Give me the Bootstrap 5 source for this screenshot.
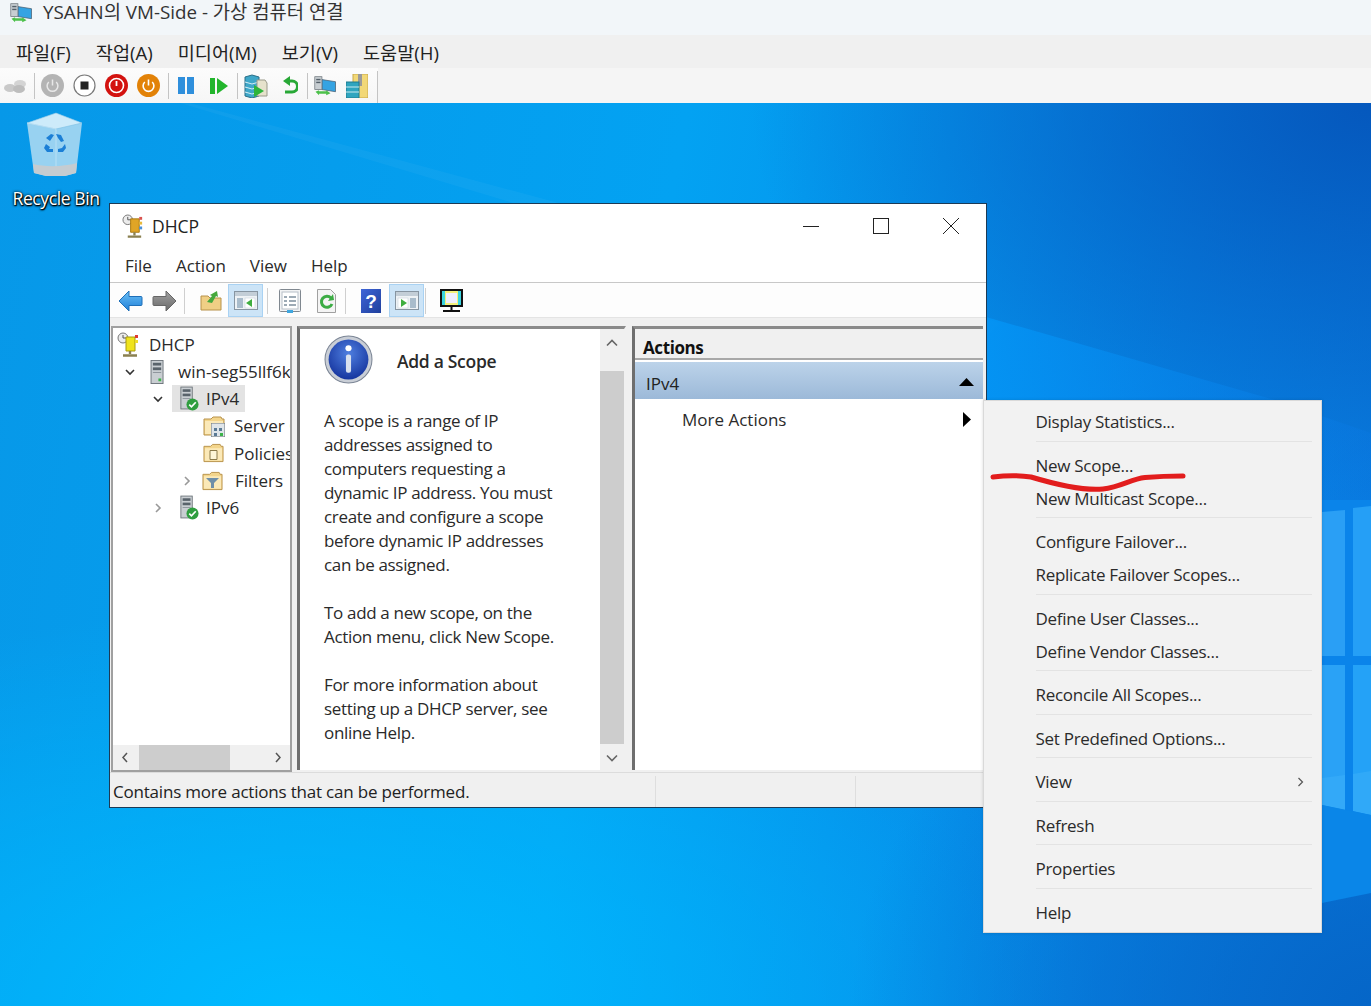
<!DOCTYPE html>
<html lang="ko">
<head>
<meta charset="UTF-8">
<title>YSAHN의 VM-Side - 가상 컴퓨터 연결</title>
<link href="https://cdn.jsdelivr.net/npm/bootstrap@5.3.0/dist/css/bootstrap.min.css" rel="stylesheet">
<script src="https://cdn.jsdelivr.net/npm/bootstrap@5.3.0/dist/js/bootstrap.bundle.min.js"></script>
<style>
html, body { height: 100%; }
body { width: 1371px; height: 1006px; overflow: hidden; font-family: "Open Sans", "Noto Sans CJK KR", sans-serif; font-size: 17px; color: #222; background: #fff; }
svg { display: block; flex: none; }
.vm-title { height: 35px; background: #f2f6f9; padding: 0 0 10px 10px; font-size: 18.8px; gap: 10px; color: #333; }
.vm-menu { height: 33px; background: #f0f0f0; padding: 3px 0 0 16px; gap: 25px; font-size: 18.6px; color: #222; }
.vm-tools { height: 35px; background: linear-gradient(#fcfcfc, #f6f6f6); padding-left: 4px; width: 378px; }
.vm-toolrow { background: #f5f5f5; height: 35px; }
.vm-tools svg { margin-right: 9px; }
.vm-sep { width: 1px; height: 26px; background: #c4c4c4; margin: 0 6px 0 0; flex: none; }
.desktop { position: relative; height: 903px; overflow: hidden;
  background: radial-gradient(ellipse 620px 420px at 1371px 0px, #0558bd 0%, rgba(5,88,189,0) 100%),
              radial-gradient(ellipse 520px 420px at 1371px 903px, #0566c8 0%, rgba(5,102,200,0) 100%),
              radial-gradient(ellipse 800px 400px at 300px 903px, #00baff 0%, rgba(0,186,255,0) 100%),
              linear-gradient(100deg, #0798e8 0%, #03a2f2 45%, #0786e6 80%, #0a78dc 100%); }
.wall-art { position: absolute; left: 0; top: 0; }
.desk-icon { position: absolute; left: 6px; top: 8px; width: 100px; text-align: center; color: #fff; font-size: 17.5px; text-shadow: 1px 1px 1px #000, 0 0 3px #000, 0 1px 2px #000; }
.desk-icon svg { margin: 0 0 0 18px; }
.dhcp-win { position: absolute; left: 109px; top: 100px; width: 878px; height: 605px; background: #fff; border: 1px solid #1c3a55; }
.win-head { height: 45px; padding-left: 12px; font-size: 17.5px; color: #222; gap: 7px; }
.win-btns { gap: 0; margin-left: auto; }
.win-btn { width: 70px; height: 43px; margin-bottom: 2px; }
.win-menu { height: 34px; padding-left: 15px; gap: 24px; font-size: 17px; border-bottom: 1px solid #c8c8c8; color: #2a2a2a; }
.win-tools { height: 35px; padding: 1px 0 0 6px; background: #fdfdfd; border-bottom: 1px solid #e4e4e4; }
.tool-on { background: #cce4f7; outline: 1px solid #a9d2f3; outline-offset: -1px; height: 33px; width: 35px; flex: none; }
.tool-sep { width: 1px; height: 26px; background: #cfcfcf; flex: none; }
.tool-cell { height: 33px; flex: none; }
.win-body { height: 454px; background: #f0f0f0; padding: 8px 3px 0 1px; gap: 5px; }
.tree-pane { width: 181px; background: #fff; border: 2px solid #a0a0a0; padding-top: 3px; position: relative; overflow: hidden; flex: none; }
.tree-row { height: 27.2px; white-space: nowrap; font-size: 17px; color: #2a2a2a; }
.tree-arrow { width: 14px; flex: none; }
.tree-hi { background: #e3e3e3; height: 27px; padding-right: 6px; }
.tree-scroll { position: absolute; left: 0; right: 0; bottom: 0; height: 25px; background: #f0f0f0; }
.tree-thumb { position: absolute; left: 26px; width: 91px; top: 0; bottom: 0; background: #cdcdcd; }
.info-pane { width: 329px; margin-bottom: 2px; background: #fff; border-left: 3px solid #6e6e6e; border-top: 3px solid #8a8a8a; border-right: 2px solid #f0f0f0; display: flex; flex: none; }
.info-text { width: 300px; padding: 0 0 0 24px; font-size: 17px; line-height: 24px; color: #2a2a2a; letter-spacing: -.33px; flex: none; }
.info-text p { margin: 0 0 24px; white-space: nowrap; }
.info-head { height: 80px; gap: 24px; font-weight: 600; font-size: 17.5px; letter-spacing: -.3px; padding-bottom: 20px; }
.info-title { padding-top: 4px; }
.info-bar { width: 24px; background: #f0f0f0; flex: none; display: flex; flex-direction: column; }
.info-thumb { flex: 1; background: #cdcdcd; margin: 42px 0 26px; }
.act-pane { flex: 1; margin-left: 1px; margin-bottom: 2px; background: #fff; border-left: 3px solid #6e6e6e; border-top: 3px solid #8a8a8a; }
.act-head { height: 31px; background: #f0f0f0; border-bottom: 2px solid #a8a8a8; padding: 9px 0 0 8px; font-weight: 700; font-size: 17px; color: #111; letter-spacing: -.4px; }
.act-sel { height: 37px; margin-top: 2px; background: linear-gradient(#bcd3ea, #9cb9d8); padding: 2px 9px 0 11px; font-size: 17px; color: #222; }
.act-sel span { padding-top: 4px; }
.act-item { height: 40px; padding: 0 12px 0 47px; font-size: 17px; color: #2a2a2a; }
.act-item span { padding-top: 2px; }
.status-bar { height: 35px; background: #f0f0f0; border-top: 1px solid #dcdcdc; font-size: 17px; color: #222; padding-top: 3px; }
.status-a { width: 546px; padding-left: 3px; border-right: 1px solid #dedede; height: 100%; white-space: nowrap; letter-spacing: -.2px; }
.status-b { width: 200px; border-right: 1px solid #dedede; height: 100%; }
.ctx-menu { position: absolute; left: 983px; top: 297px; width: 339px; height: 533px; background: #f2f2f2; border: 1px solid #d9d9d9; padding: 4.5px 9px 0 51.5px; font-size: 17px; color: #2b2b2b; box-shadow: 0 0 3px rgba(0,0,0,.15); }
.ctx-item { height: 33px; white-space: nowrap; letter-spacing: -.28px; }
.ctx-line { height: 1px; background: #e3e3e3; margin: 2px 0 7.5px; }
.red-mark { position: absolute; left: 985px; top: 362px; }
</style>
</head>
<body>
<svg width="0" height="0" style="position:absolute">
  <defs>
    <symbol id="ic-server" viewBox="0 0 16 26">
      <rect x="1" y="0.5" width="13" height="25" fill="#c9ced2" stroke="#6a7278"/>
      <rect x="3" y="3" width="9" height="3" fill="#59636b"/><rect x="3" y="8" width="9" height="3" fill="#59636b"/>
      <rect x="3" y="13" width="9" height="1" fill="#8a9298"/><rect x="9" y="20" width="3" height="3" fill="#3cb34a"/>
    </symbol>
    <symbol id="ic-check" viewBox="0 0 14 14">
      <circle cx="7" cy="7" r="6.5" fill="#2f9e3f"/><path d="M3.5 7.2l2.4 2.4 4.6-5" fill="none" stroke="#fff" stroke-width="1.8"/>
    </symbol>
    <symbol id="ic-folder" viewBox="0 0 22 20">
      <path d="M1 3h7l2-2h8l1 2h2v16H1z" fill="#f3d58c" stroke="#b8924a"/><rect x="2" y="5" width="18" height="13" fill="#fbe9b8"/>
    </symbol>
    <symbol id="ic-dhcp" viewBox="0 0 24 26">
      <circle cx="6" cy="6" r="5" fill="#ececec" stroke="#777"/><path d="M6 3v3h3" fill="none" stroke="#555"/>
      <path d="M9 5h9v14H9z" fill="#e0a526" stroke="#a87812"/>
      <rect x="18" y="3" width="3" height="3" fill="#d9534f"/><rect x="18" y="8" width="3" height="3" fill="#e8b93a"/><rect x="18" y="13" width="3" height="3" fill="#4a90d9"/>
      <path d="M13 19v3M6 23.500h14" stroke="#8a8050" stroke-width="2.400"/>
    </symbol>
    <symbol id="ic-dhcp-root" viewBox="0 0 24 26">
      <circle cx="6" cy="6" r="5" fill="#ececec" stroke="#777"/><path d="M6 3v3h3" fill="none" stroke="#555"/>
      <path d="M9 5h9v14H9z" fill="#efe31c" stroke="#a89a12"/>
      <rect x="18" y="3" width="3" height="3" fill="#e03a2f"/><rect x="18" y="8" width="3" height="3" fill="#f0dc2a"/>
      <path d="M13 19v3M6 23.500h14" stroke="#8a8050" stroke-width="2.400"/>
    </symbol>
    <symbol id="ic-monitor" viewBox="0 0 32 28">
      <path d="M11 5l19 3v14l-19-3z" fill="#35a3e2" stroke="#47596a"/>
      <rect x="1" y="1" width="10" height="18" fill="#c8ced2" stroke="#6a7278"/>
      <rect x="3" y="4" width="6" height="2" fill="#55606a"/><rect x="3" y="8" width="6" height="2" fill="#55606a"/>
      <path d="M2 22l5-2v1.500h10V20l6 4-6 3v-2H7v2z" fill="#4cc04a"/>
    </symbol>
    <symbol id="ic-window" viewBox="0 0 24 19">
      <rect x=".5" y=".5" width="23" height="18" fill="#eef2f5" stroke="#8795a1"/><rect x="1" y="1" width="22" height="4" fill="#c3ced7"/>
    </symbol>
  </defs>
</svg>

<div class="vm-title d-flex align-items-center">
  <svg width="23" height="20"><use href="#ic-monitor"/></svg>
  <span>YSAHN의 VM-Side - 가상 컴퓨터 연결</span>
</div>
<div class="vm-menu d-flex align-items-center">
  <span>파일(F)</span><span>작업(A)</span><span>미디어(M)</span><span>보기(V)</span><span>도움말(H)</span>
</div>
<div class="vm-toolrow">
<div class="vm-tools d-flex align-items-center">
  <svg width="22" height="14" viewBox="0 0 22 14" style="margin-right:8px"><ellipse cx="6" cy="9" rx="6" ry="4" fill="#c9c9c9"/><ellipse cx="16" cy="5" rx="6" ry="4" fill="#d4d4d4"/><ellipse cx="15" cy="10" rx="6" ry="4" fill="#bdbdbd"/></svg>
  <div class="vm-sep"></div>
  <svg width="23" height="23" viewBox="0 0 23 23"><circle cx="11.5" cy="11.5" r="11.5" fill="#b4b4b4"/><path d="M7.8 8a5.4 5.4 0 1 0 7.4 0M11.5 5.5v6" fill="none" stroke="#e8e8e8" stroke-width="1.5"/></svg>
  <svg width="23" height="23" viewBox="0 0 23 23"><circle cx="11.5" cy="11.5" r="10.5" fill="#fff" stroke="#7a7a7a" stroke-width="1.2"/><rect x="7.5" y="7.5" width="8" height="8" fill="#222"/></svg>
  <svg width="23" height="23" viewBox="0 0 23 23"><circle cx="11.5" cy="11.5" r="11.5" fill="#d3120f"/><circle cx="11.5" cy="11.5" r="7" fill="none" stroke="#fff" stroke-width="1.6"/><path d="M11.5 7v5" stroke="#fff" stroke-width="1.8"/></svg>
  <svg width="23" height="23" viewBox="0 0 23 23"><circle cx="11.5" cy="11.5" r="11.5" fill="#e28208"/><path d="M7.8 8a5.4 5.4 0 1 0 7.4 0M11.5 5.5v6" fill="none" stroke="#fff" stroke-width="1.6"/></svg>
  <div class="vm-sep" style="margin-left:-1px;margin-right:9px"></div>
  <svg width="16" height="17" viewBox="0 0 16 17" style="margin-right:16px"><rect width="7" height="17" fill="#2f8fdc"/><rect x="9" width="7" height="17" fill="#2f8fdc"/></svg>
  <svg width="18" height="16" viewBox="0 0 18 16"><rect width="5" height="16" fill="#22b52c"/><path d="M7 0l11 8-11 8z" fill="#22b52c"/></svg>
  <div class="vm-sep"></div>
  <svg width="24" height="24" viewBox="0 0 24 24" style="margin-right:14px"><path d="M1 3l7-2 7 2v19l-7 2-7-2z" fill="#3fa7c9" stroke="#2a6f88"/><path d="M1 8l7 2 7-2M1 13l7 2 7-2M1 18l7 2 7-2" fill="none" stroke="#d5eef5"/><path d="M13 6h8l2 3v13H13z" fill="#e6e2cc" stroke="#9a9a8a"/><path d="M10 11l10 6-10 6z" fill="#2db53a"/></svg>
  <svg width="16" height="19" viewBox="0 0 16 19"><path d="M6 5h4a5 5 0 0 1 0 11H3" fill="none" stroke="#28a836" stroke-width="3"/><path d="M8 0v10L1 5z" fill="#28a836"/></svg>
  <div class="vm-sep"></div>
  <svg width="23" height="20"><use href="#ic-monitor"/></svg>
  <svg width="22" height="24" viewBox="0 0 22 24"><rect x="7" y="0" width="15" height="24" fill="#f2d877" stroke="#c8a94a"/><rect x="12" y="0" width="4" height="12" fill="#9a9a9a"/><rect x="0" y="8" width="13" height="16" fill="#2fa5bf" stroke="#1e7a8e"/><path d="M0 13h13M0 18h13" stroke="#c9eaf0"/></svg>
  <div class="vm-sep" style="margin:0;height:32px;align-self:flex-end"></div>
</div>
</div>

<div class="desktop">
  <svg class="wall-art" width="1371" height="903" viewBox="0 0 1371 903">
    <defs>
      <linearGradient id="beam" x1="0" y1="0" x2="1" y2="0"><stop offset="0" stop-color="#0494f4" stop-opacity=".9"/><stop offset="1" stop-color="#0a7ae6" stop-opacity=".3"/></linearGradient>
    </defs>
    <path d="M190 0L1000 220L980 240L180 0z" fill="#fff" opacity=".04"/>
    <path d="M986 214L1275 297L1371 330V480H986z" fill="url(#beam)"/>
    <path d="M1322 397H1371V720H1322z" fill="#0a84ea"/>
    <path d="M1322 409L1345 407V553H1322z" fill="#2a9ff5"/>
    <path d="M1353 405L1371 403V553H1353z" fill="#259ff6"/>
    <path d="M1322 562H1345V707L1322 702z" fill="#2aa2f6"/>
    <path d="M1353 562H1371V712L1353 708z" fill="#24a2f7"/>
    <path d="M1322 675L1345 672V707L1322 702zM1353 671L1371 668V712L1353 708z" fill="#3aaefa" opacity=".55"/>
    <path d="M1322 702L1371 712V790L1322 800z" fill="#0a86e8"/>
  </svg>

  <div class="desk-icon">
    <svg width="60" height="66" viewBox="0 0 60 66">
      <path d="M3 12L32 2l26 10-6 50-11 3H22l-12-3z" fill="#a9d8f2" fill-opacity=".9"/>
      <path d="M3 12L32 2l26 10-26 6z" fill="#cdebfa" stroke="#7cc0e4" stroke-width=".6"/>
      <path d="M3 12l29 6v47" fill="none" stroke="#d9f0fb" stroke-opacity=".5"/>
      <path d="M9 53c12 3 30 3 44-1l-1 10-11 3H22l-12-3z" fill="#c5ccd1"/>
      <path d="M22 27l5-4 3 1-4 6zM32 23l5 1 3 6-3 1-3-4zM41 33l1 4-3 4h-5v-3l4-1zM29 38v3h-6l-3-4 2-4 4 3-1 2z" fill="#1b7fd6"/>
    </svg>
    <div style="margin-top:9px;line-height:24px;letter-spacing:-.4px">Recycle Bin</div>
  </div>

  <div class="dhcp-win">
    <div class="win-head d-flex align-items-center">
      <svg width="23" height="25"><use href="#ic-dhcp"/></svg>
      <span>DHCP</span>
      <div class="win-btns d-flex">
        <div class="win-btn d-flex align-items-center justify-content-center"><svg width="16" height="16" viewBox="0 0 16 16"><path d="M0 8.5h16" stroke="#222"/></svg></div>
        <div class="win-btn d-flex align-items-center justify-content-center"><svg width="16" height="16" viewBox="0 0 16 16"><rect x=".5" y=".5" width="15" height="15" fill="none" stroke="#222"/></svg></div>
        <div class="win-btn d-flex align-items-center justify-content-center"><svg width="16" height="16" viewBox="0 0 16 16"><path d="M0 0l16 16M16 0L0 16" stroke="#222"/></svg></div>
      </div>
    </div>
    <div class="win-menu d-flex align-items-center">
      <span>File</span><span>Action</span><span>View</span><span>Help</span>
    </div>
    <div class="win-tools d-flex align-items-center">
      <div class="tool-cell d-flex align-items-center justify-content-center" style="width:28px"><svg width="25" height="22" viewBox="0 0 25 22"><defs><linearGradient id="backG" x1="0" y1="0" x2="0" y2="1"><stop offset="0" stop-color="#6cc0f5"/><stop offset="1" stop-color="#1f7fd8"/></linearGradient></defs><path d="M1 11L11 1v5.500h12a1 1 0 0 1 1 1v7a1 1 0 0 1-1 1H11V21z" fill="url(#backG)" stroke="#1f6fb8" stroke-linejoin="round"/></svg></div>
      <div class="tool-cell d-flex align-items-center justify-content-center" style="width:40px"><svg width="25" height="22" viewBox="0 0 25 22"><defs><linearGradient id="fwdG" x1="0" y1="0" x2="0" y2="1"><stop offset="0" stop-color="#a0a0a0"/><stop offset="1" stop-color="#6a6a6a"/></linearGradient></defs><path d="M24 11L14 1v5.500H2a1 1 0 0 0-1 1v7a1 1 0 0 0 1 1h12V21z" fill="url(#fwdG)" stroke="#666" stroke-linejoin="round"/></svg></div>
      <div class="tool-sep" style="margin-right:11px"></div>
      <div class="tool-cell d-flex align-items-center justify-content-center" style="width:30px"><svg width="22" height="21" viewBox="0 0 22 21"><path d="M1 6h7l2 2h11v12H1z" fill="#f0cf85" stroke="#b8924a"/><path d="M7 12l5-6-2-1 7-4 1 6-2-1-4 7z" fill="#46a83c"/></svg></div>
      <div class="tool-on d-flex align-items-center justify-content-center" style="margin-left:2px"><svg width="24" height="19" viewBox="0 0 24 19"><use href="#ic-window"/><rect x="3" y="7" width="6" height="10" fill="#a9bccb"/><rect x="11" y="7" width="10" height="10" fill="#fff" stroke="#c3ced7" stroke-width=".5"/><path d="M18 8v8l-6-4z" fill="#3fae3f"/></svg></div>
      <div class="tool-sep" style="margin:0 11px 0 4px"></div>
      <div class="tool-cell d-flex align-items-center justify-content-center" style="width:22px"><svg width="22" height="24" viewBox="0 0 22 24"><rect x=".5" y=".5" width="21" height="22" rx="1" fill="#f2f3f4" stroke="#808890"/><rect x="3" y="3" width="16" height="17" fill="#fff" stroke="#b8c0c8"/><path d="M5 8h3M10 8h7M5 12h3M10 12h7M5 16h3M10 16h7" stroke="#7d8f9d" stroke-width="1.500"/><rect x="8" y="21" width="6" height="3" fill="#3fa7e0"/></svg></div>
      <div style="width:15px;flex:none"></div>
      <div class="tool-cell d-flex align-items-center justify-content-center" style="width:20px"><svg width="19" height="24" viewBox="0 0 19 24"><path d="M.5.5h13l5 5v18H.5z" fill="#f4f4f4" stroke="#a0a0a0"/><path d="M14 9a5.500 5.500 0 1 0 1 6" fill="none" stroke="#3cac44" stroke-width="3"/><path d="M11 12l6-1-1-6z" fill="#3cac44"/></svg></div>
      <div class="tool-sep" style="margin:0 15px 0 9px"></div>
      <div class="tool-cell d-flex align-items-center justify-content-center" style="width:20px"><svg width="20" height="24" viewBox="0 0 20 24"><defs><linearGradient id="helpG" x1="0" y1="0" x2="1" y2="1"><stop offset="0" stop-color="#3f66d8"/><stop offset="1" stop-color="#1f3f9c"/></linearGradient></defs><rect width="20" height="24" fill="url(#helpG)"/><text x="10" y="19" text-anchor="middle" font-family="Liberation Sans" font-weight="700" font-size="19" fill="#fff">?</text></svg></div>
      <div style="width:8px;flex:none"></div>
      <div class="tool-on d-flex align-items-center justify-content-center"><svg width="24" height="19" viewBox="0 0 24 19"><use href="#ic-window"/><rect x="15" y="7" width="6" height="10" fill="#a9bccb"/><rect x="3" y="7" width="10" height="10" fill="#fff" stroke="#c3ced7" stroke-width=".5"/><path d="M6 8v8l6-4z" fill="#3fae3f"/></svg></div>
      <div class="tool-sep" style="margin:0 12px 0 1px"></div>
      <div class="tool-cell d-flex align-items-center justify-content-center" style="width:27px"><svg width="25" height="25" viewBox="0 0 25 25"><rect x="1" y="1" width="23" height="18" fill="#111"/><rect x="3" y="3" width="19" height="14" fill="#f4f07a"/><rect x="7" y="5" width="11" height="10" fill="#eef"/><path d="M3 3h3v14H3zM19 3h3v14h-3z" fill="#3ad4e0"/><path d="M12.5 19v3M4 23h17" stroke="#111" stroke-width="2"/></svg></div>
    </div>

    <div class="win-body d-flex">
      <div class="tree-pane">
        <div class="tree-row d-flex align-items-center" style="padding-left:4px;gap:8px"><svg width="24" height="26"><use href="#ic-dhcp-root"/></svg><span>DHCP</span></div>
        <div class="tree-row d-flex align-items-center" style="padding-left:10px;gap:13px"><svg class="tree-arrow" width="14" height="14" viewBox="0 0 14 14"><path d="M3 5l4 4 4-4" fill="none" stroke="#333" stroke-width="1.6"/></svg><svg width="15" height="24"><use href="#ic-server"/></svg><span>win-seg55llf6k</span></div>
        <div class="tree-row d-flex align-items-center" style="padding-left:38px"><svg class="tree-arrow" width="14" height="14" viewBox="0 0 14 14"><path d="M3 5l4 4 4-4" fill="none" stroke="#333" stroke-width="1.6"/></svg>
          <div class="tree-hi d-flex align-items-center" style="padding-left:8px;gap:6px;margin-left:7px"><div class="position-relative" style="width:20px;height:25px"><svg width="14" height="24"><use href="#ic-server"/></svg><svg class="position-absolute" style="left:6px;top:12px" width="13" height="13"><use href="#ic-check"/></svg></div><span>IPv4</span></div></div>
        <div class="tree-row d-flex align-items-center" style="padding-left:90px;gap:9px"><div class="position-relative" style="width:22px;height:20px"><svg width="22" height="20"><use href="#ic-folder"/></svg><svg class="position-absolute" style="left:8px;top:7px" width="14" height="14" viewBox="0 0 14 14"><rect width="14" height="14" fill="#dfe5ea" stroke="#6a7278"/><path d="M3 5h3v3H3zM8 5h3v3H8zM3 10h3v3H3z" fill="#5a7a95"/><rect x="9" y="10" width="3" height="3" fill="#3cb34a"/></svg></div><span>Server O</span></div>
        <div class="tree-row d-flex align-items-center" style="padding-left:90px;gap:10px"><div class="position-relative" style="width:21px;height:20px"><svg width="21" height="20"><use href="#ic-folder"/></svg><svg class="position-absolute" style="left:6px;top:7px" width="9" height="10" viewBox="0 0 9 10"><path d="M1 .5h7v9H1z" fill="#fdf6d8" stroke="#8a7a4a"/></svg></div><span>Policies</span></div>
        <div class="tree-row d-flex align-items-center" style="padding-left:67px;gap:8px"><svg class="tree-arrow" width="14" height="14" viewBox="0 0 14 14"><path d="M5 3l4 4-4 4" fill="none" stroke="#999" stroke-width="1.6"/></svg><div class="position-relative" style="width:21px;height:20px"><svg width="21" height="20"><use href="#ic-folder"/></svg><svg class="position-absolute" style="left:4px;top:7px" width="13" height="10" viewBox="0 0 13 10"><path d="M0 0h13L8 5v5H5V5z" fill="#6f8fa8"/></svg></div><span class="ms-1">Filters</span></div>
        <div class="tree-row d-flex align-items-center" style="padding-left:38px"><svg class="tree-arrow" width="14" height="14" viewBox="0 0 14 14"><path d="M5 3l4 4-4 4" fill="none" stroke="#999" stroke-width="1.6"/></svg>
          <div class="d-flex align-items-center" style="padding-left:15px;gap:6px"><div class="position-relative" style="width:20px;height:25px"><svg width="14" height="24"><use href="#ic-server"/></svg><svg class="position-absolute" style="left:6px;top:12px" width="13" height="13"><use href="#ic-check"/></svg></div><span>IPv6</span></div></div>
        <div class="tree-scroll">
          <div class="tree-thumb"></div>
          <svg class="position-absolute" style="left:8px;top:7px" width="8" height="11" viewBox="0 0 8 11"><path d="M6 1L2 5.5 6 10" fill="none" stroke="#555" stroke-width="1.5"/></svg>
          <svg class="position-absolute" style="right:8px;top:7px" width="8" height="11" viewBox="0 0 8 11"><path d="M2 1l4 4.5L2 10" fill="none" stroke="#555" stroke-width="1.5"/></svg>
        </div>
      </div>

      <div class="info-pane">
        <div class="info-text">
          <div class="info-head d-flex align-items-center">
            <svg width="49" height="49" viewBox="0 0 48 48"><defs><radialGradient id="infoG" cx=".5" cy=".35" r=".7"><stop offset="0" stop-color="#4f7fe0"/><stop offset="1" stop-color="#12309a"/></radialGradient></defs><circle cx="24" cy="24" r="23" fill="#c9ced6" stroke="#7a8494"/><circle cx="24" cy="24" r="19.5" fill="url(#infoG)"/><circle cx="24" cy="13" r="3" fill="#fff"/><rect x="21.5" y="19" width="5" height="18" rx="2" fill="#d8e0ee"/></svg>
            <span class="info-title">Add a Scope</span>
          </div>
          <p>A scope is a range of IP<br>addresses assigned to<br>computers requesting a<br>dynamic IP address. You must<br>create and configure a scope<br>before dynamic IP addresses<br>can be assigned.</p>
          <p>To add a new scope, on the<br>Action menu, click New Scope.</p>
          <p>For more information about<br>setting up a DHCP server, see<br>online Help.</p>
        </div>
        <div class="info-bar position-relative">
          <div class="info-thumb"></div>
          <svg class="position-absolute" style="left:6px;top:10px" width="12" height="8" viewBox="0 0 12 8"><path d="M1 6.5l5-5 5 5" fill="none" stroke="#666" stroke-width="1.6"/></svg>
          <svg class="position-absolute" style="left:6px;bottom:8px" width="12" height="8" viewBox="0 0 12 8"><path d="M1 1.5l5 5 5-5" fill="none" stroke="#666" stroke-width="1.6"/></svg>
        </div>
      </div>

      <div class="act-pane">
        <div class="act-head d-flex align-items-center">Actions</div>
        <div class="act-sel d-flex align-items-center justify-content-between"><span>IPv4</span><svg width="15" height="8" viewBox="0 0 15 8"><path d="M7.5 0L15 8H0z" fill="#000"/></svg></div>
        <div class="act-item d-flex align-items-center justify-content-between"><span>More Actions</span><svg width="8" height="15" viewBox="0 0 8 15"><path d="M0 0l8 7.5L0 15z" fill="#000"/></svg></div>
      </div>
    </div>

    <div class="status-bar d-flex align-items-center">
      <div class="status-a d-flex align-items-center">Contains more actions that can be performed.</div>
      <div class="status-b"></div>
    </div>
  </div>

  <div class="ctx-menu">
    <div class="ctx-item d-flex align-items-center">Display Statistics...</div>
    <div class="ctx-line"></div>
    <div class="ctx-item d-flex align-items-center">New Scope...</div>
    <div class="ctx-item d-flex align-items-center">New Multicast Scope...</div>
    <div class="ctx-line"></div>
    <div class="ctx-item d-flex align-items-center">Configure Failover...</div>
    <div class="ctx-item d-flex align-items-center">Replicate Failover Scopes...</div>
    <div class="ctx-line"></div>
    <div class="ctx-item d-flex align-items-center">Define User Classes...</div>
    <div class="ctx-item d-flex align-items-center">Define Vendor Classes...</div>
    <div class="ctx-line"></div>
    <div class="ctx-item d-flex align-items-center">Reconcile All Scopes...</div>
    <div class="ctx-line"></div>
    <div class="ctx-item d-flex align-items-center">Set Predefined Options...</div>
    <div class="ctx-line"></div>
    <div class="ctx-item d-flex align-items-center justify-content-between"><span>View</span><svg width="7" height="10" viewBox="0 0 7 10" style="margin-right:8px"><path d="M1.5 1l4 4-4 4" fill="none" stroke="#555" stroke-width="1.2"/></svg></div>
    <div class="ctx-line"></div>
    <div class="ctx-item d-flex align-items-center">Refresh</div>
    <div class="ctx-line"></div>
    <div class="ctx-item d-flex align-items-center">Properties</div>
    <div class="ctx-line"></div>
    <div class="ctx-item d-flex align-items-center">Help</div>
  </div>

  <svg class="red-mark" width="204" height="30" viewBox="0 0 204 30"><path d="M8 12C20 10.500 36 10.500 46 12C66 18 96 26 118 24C136 22 146 14 160 12.500C172 11.500 186 11 198 11" fill="none" stroke="#e21d1d" stroke-width="5" stroke-linecap="round"/></svg>
</div>
</body>
</html>
